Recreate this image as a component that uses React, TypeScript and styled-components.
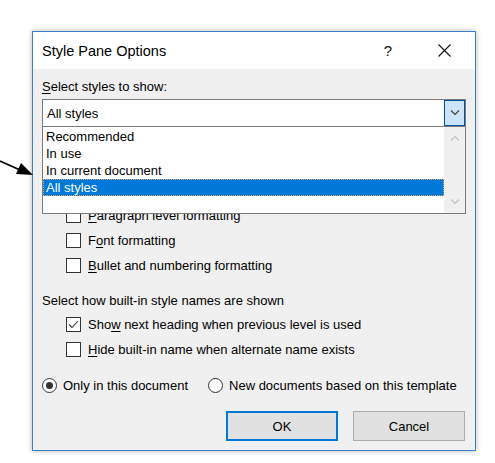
import styled, { createGlobalStyle } from 'styled-components'

const GlobalStyle = createGlobalStyle`
  html, body {
    margin: 0;
    padding: 0;
    background: #ffffff;
  }
  body {
    font-family: "Segoe UI", "Liberation Sans", Arial, sans-serif;
    font-size: 13px;
    color: #000000;
  }
`

const Page = styled.div`
  position: relative;
  width: 495px;
  height: 463px;
  box-sizing: border-box;
  padding: 31px 0 0 32px;
  overflow: hidden;
`

const Dialog = styled.div`
  width: 444px;
  height: 420px;
  box-sizing: border-box;
  border: 1px solid #3b80c6;
  box-shadow: 0 0 5px rgba(0, 0, 0, 0.3);
  background: #f0f0f0;
  display: flex;
  flex-direction: column;
`

const TitleBar = styled.div`
  height: 37px;
  flex-shrink: 0;
  background: #ffffff;
  display: flex;
  align-items: center;
  padding-left: 9px;
  padding-right: 3px;
`

const Title = styled.div`
  flex: 1;
  font-size: 14.5px;
  padding-top: 1px;
`

const TitleButton = styled.div`
  width: 56px;
  height: 37px;
  display: flex;
  align-items: center;
  justify-content: center;
  font-size: 15px;
  color: #111;
`

const Body = styled.div`
  flex: 1;
  display: flex;
  flex-direction: column;
  padding: 10px 9px 9px 9px;
`

const Label = styled.div<{ $top?: number }>`
  height: 16px;
  line-height: 16px;
  margin-top: ${(p) => p.$top ?? 0}px;
  white-space: nowrap;
`

const Key = styled.span`
  text-decoration: underline;
  text-underline-offset: 2px;
`

const ComboWrap = styled.div`
  position: relative;
  margin-top: 4px;
`

const Combo = styled.div`
  height: 28px;
  box-sizing: border-box;
  border: 1px solid #7a7a7a;
  background: #ffffff;
  display: flex;
  align-items: stretch;
  padding-left: 4px;
`

const ComboText = styled.div`
  flex: 1;
  display: flex;
  align-items: center;
`

const DropButton = styled.div`
  width: 21px;
  box-sizing: border-box;
  border: 1px solid #005499;
  background: #cce4f7;
  display: flex;
  align-items: center;
  justify-content: center;
`

const DropList = styled.div`
  position: absolute;
  top: 27px;
  left: 0;
  right: 0;
  height: 88px;
  box-sizing: border-box;
  border: 1px solid #7a7a7a;
  background: #ffffff;
  display: flex;
  z-index: 3;
`

const Items = styled.div`
  flex: 1;
  display: flex;
  flex-direction: column;
  padding-top: 1px;
`

const Item = styled.div<{ $selected?: boolean }>`
  height: 17px;
  box-sizing: border-box;
  padding-left: ${(p) => (p.$selected ? 2 : 3)}px;
  background: ${(p) => (p.$selected ? '#0078d7' : 'transparent')};
  color: ${(p) => (p.$selected ? '#ffffff' : '#000000')};
  border: ${(p) => (p.$selected ? '1px dotted #e0a878' : 'none')};
  line-height: ${(p) => (p.$selected ? 15 : 17)}px;
  white-space: nowrap;
`

const ScrollBar = styled.div`
  width: 21px;
  background: #f0f0f0;
  display: flex;
  flex-direction: column;
  justify-content: space-between;
  align-items: center;
  padding: 8px 0 8px 0;
`

/* the part of the dialog the open list covers (sort combo and its labels) */
const CoveredArea = styled.div`
  height: 76px;
  flex-shrink: 0;
`

const Group = styled.div<{ $top: number }>`
  display: flex;
  flex-direction: column;
  padding-left: 24px;
  margin-top: ${(p) => p.$top}px;
`

const CheckRow = styled.div`
  height: 25px;
  display: flex;
  align-items: center;
  gap: 7px;
  white-space: nowrap;
`

const Box = styled.div`
  width: 15px;
  height: 15px;
  box-sizing: border-box;
  border: 1px solid #333333;
  background: #ffffff;
  display: flex;
  align-items: center;
  justify-content: center;
`

const RadioRow = styled.div`
  height: 25px;
  margin-top: 11px;
  display: flex;
  align-items: center;
  gap: 20px;
`

const RadioOption = styled.div`
  display: flex;
  align-items: center;
  gap: 6px;
  white-space: nowrap;
`

const RadioCircle = styled.div<{ $checked?: boolean }>`
  width: 15px;
  height: 15px;
  box-sizing: border-box;
  border-radius: 50%;
  border: 1px solid #333333;
  background: #ffffff;
  display: flex;
  align-items: center;
  justify-content: center;

  &::after {
    content: '';
    display: ${(p) => (p.$checked ? 'block' : 'none')};
    width: 7px;
    height: 7px;
    border-radius: 50%;
    background: #333333;
  }
`

const Buttons = styled.div`
  margin-top: 13px;
  display: flex;
  justify-content: flex-end;
  gap: 15px;
  padding-right: 1px;
`

const Button = styled.div<{ $default?: boolean }>`
  width: 112px;
  height: 30px;
  box-sizing: border-box;
  border: ${(p) => (p.$default ? '2px solid #0078d7' : '1px solid #adadad')};
  background: #e1e1e1;
  display: flex;
  align-items: center;
  justify-content: center;
`

const Arrow = styled.svg`
  position: absolute;
  left: 0;
  top: 150px;
  z-index: 5;
`

const Chevron = ({ up, color }: { up?: boolean; color: string }) => (
  <svg width="10" height="6" viewBox="0 0 10 6">
    <path
      d={up ? 'M1 5.5 L5 1.5 L9 5.5' : 'M1 0.5 L5 4.5 L9 0.5'}
      fill="none"
      stroke={color}
      strokeWidth="1.2"
    />
  </svg>
)

const Check = ({ checked }: { checked?: boolean }) => (
  <Box>
    {checked && (
      <svg width="11" height="9" viewBox="0 0 11 9">
        <path d="M1 4.5 L4 7.5 L10 1" fill="none" stroke="#333" strokeWidth="1.1" />
      </svg>
    )}
  </Box>
)

export default function App() {
  return (
    <>
      <GlobalStyle />
      <Page>
        <Arrow width="40" height="35" viewBox="0 0 40 35">
          <line x1="0" y1="11" x2="19" y2="19.5" stroke="#000" strokeWidth="1.6" />
          <polygon points="33,25 21,13 16,24" fill="#000" />
        </Arrow>
        <Dialog>
          <TitleBar>
            <Title>Style Pane Options</Title>
            <TitleButton>?</TitleButton>
            <TitleButton>
              <svg width="13" height="13" viewBox="0 0 13 13">
                <path d="M0.5 0.5 L12.5 12.5 M12.5 0.5 L0.5 12.5" stroke="#111" strokeWidth="1.1" />
              </svg>
            </TitleButton>
          </TitleBar>
          <Body>
            <Label>
              <Key>S</Key>elect styles to show:
            </Label>
            <ComboWrap>
              <Combo>
                <ComboText>All styles</ComboText>
                <DropButton>
                  <Chevron color="#444" />
                </DropButton>
              </Combo>
              <DropList>
                <Items>
                  <Item>Recommended</Item>
                  <Item>In use</Item>
                  <Item>In current document</Item>
                  <Item $selected>All styles</Item>
                </Items>
                <ScrollBar>
                  <Chevron up color="#c2c2c2" />
                  <Chevron color="#c2c2c2" />
                </ScrollBar>
              </DropList>
            </ComboWrap>
            <CoveredArea />
            <Group $top={0}>
              <CheckRow>
                <Check />
                <span>
                  <Key>P</Key>aragraph level formatting
                </span>
              </CheckRow>
              <CheckRow>
                <Check />
                <span>
                  F<Key>o</Key>nt formatting
                </span>
              </CheckRow>
              <CheckRow>
                <Check />
                <span>
                  <Key>B</Key>ullet and numbering formatting
                </span>
              </CheckRow>
            </Group>
            <Label $top={15}>Select how built-in style names are shown</Label>
            <Group $top={3}>
              <CheckRow>
                <Check checked />
                <span>
                  Sho<Key>w</Key> next heading when previous level is used
                </span>
              </CheckRow>
              <CheckRow>
                <Check />
                <span>
                  <Key>H</Key>ide built-in name when alternate name exists
                </span>
              </CheckRow>
            </Group>
            <RadioRow>
              <RadioOption>
                <RadioCircle $checked />
                <span>Only in this document</span>
              </RadioOption>
              <RadioOption>
                <RadioCircle />
                <span>New documents based on this template</span>
              </RadioOption>
            </RadioRow>
            <Buttons>
              <Button $default>OK</Button>
              <Button>Cancel</Button>
            </Buttons>
          </Body>
        </Dialog>
      </Page>
    </>
  )
}
